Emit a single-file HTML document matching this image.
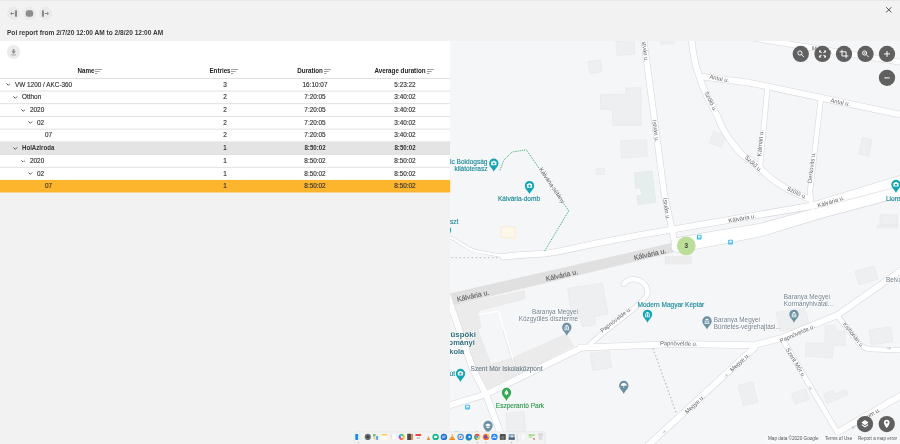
<!DOCTYPE html>
<html><head><meta charset="utf-8"><title>Poi report</title>
<style>
html,body{margin:0;padding:0;}
body{width:900px;height:444px;overflow:hidden;position:relative;background:#f2f2f2;font-family:"Liberation Sans",sans-serif;color:#333;}
.abs{position:absolute;}
#topline{left:0;top:0;width:900px;height:1px;background:#e6e8ec;}
.rb{position:absolute;width:13.4px;height:13.4px;border-radius:50%;background:#eaeaea;}
#title{left:6.6px;top:29px;font-size:6.95px;font-weight:700;line-height:8px;white-space:nowrap;color:#3a3a3a;transform:scaleX(.945);transform-origin:0 50%;}
#panel{left:0;top:40.7px;width:450px;height:151.8px;background:#fff;}
.hd{position:absolute;top:67.25px;font-size:6.65px;font-weight:700;line-height:8px;white-space:nowrap;color:#222;transform:translateX(-50%) scaleX(.94);}
.row{position:absolute;left:0;width:450px;height:12.69px;font-size:6.8px;line-height:12.69px;color:#333;-webkit-text-stroke:0.15px #333;}
.row.g{font-weight:700;-webkit-text-stroke:0;}
.row.g span{transform:scaleX(.9);}
.row.g .c{transform:translateX(-50%) scaleX(.9);}
.row span{position:absolute;top:0.45px;white-space:nowrap;transform:scaleX(.94);transform-origin:0 50%;}
.row .c{transform:translateX(-50%) scaleX(.94);transform-origin:50% 50%;}
.row svg{position:absolute;top:5.1px;width:4.6px;height:2.85px;}
</style></head><body>
<div id="wrap" style="position:absolute;left:0;top:0;width:900px;height:444px;will-change:transform">
<div class="abs" id="topline"></div>
<div class="rb" style="left:6.9px;top:6.5px"></div>
<div class="rb" style="left:22.9px;top:6.5px"></div>
<div class="rb" style="left:38.7px;top:6.5px"></div>
<div class="abs" id="title">Poi report from 2/7/20 12:00 AM to 2/8/20 12:00 AM</div>
<div class="abs" id="panel"></div>
<div class="rb" style="left:6.9px;top:45.3px;background:#ebebeb"></div>
<svg class="abs" style="left:0;top:0" width="60" height="60" viewBox="0 0 60 60">
<g fill="#8a8a8a" stroke="none">
<rect x="14.9" y="10.4" width="2.1" height="6.3"/>
<path d="M10 13.5 L12 11.8 V13.05 H14.1 V13.95 H12 V15.2 Z"/>
<rect x="25.8" y="10.3" width="7.3" height="6.4" rx="2.6" ry="2.2"/>
<rect x="41.9" y="10.4" width="2.1" height="6.3"/>
<path d="M49.1 13.5 L47.1 11.8 V13.05 H44.8 V13.95 H47.1 V15.2 Z"/>
<path d="M12.7 49.2 H14.5 V51.4 H15.9 L13.6 53.8 L11.3 51.4 H12.7 Z"/>
<rect x="11.3" y="54.5" width="4.6" height="0.8"/>
</g>
<path d="M28.1 10.4V16.6M30.8 10.4V16.6" stroke="#a2a2a2" stroke-width="0.5"/>
</svg>

<div class="hd" style="left:85.5px">Name</div>
<div class="hd" style="left:220.2px">Entries</div>
<div class="hd" style="left:310px">Duration</div>
<div class="hd" style="left:400.2px">Average duration</div>
<svg class="abs" style="left:95px;top:68.6px" width="7" height="5" viewBox="0 0 7 5"><path d="M0 0.5H7M0 2.5H4.7M0 4.5H2.3" stroke="#808080" stroke-width="0.75" fill="none"/></svg><svg class="abs" style="left:231.4px;top:68.6px" width="7" height="5" viewBox="0 0 7 5"><path d="M0 0.5H7M0 2.5H4.7M0 4.5H2.3" stroke="#808080" stroke-width="0.75" fill="none"/></svg><svg class="abs" style="left:324px;top:68.6px" width="7" height="5" viewBox="0 0 7 5"><path d="M0 0.5H7M0 2.5H4.7M0 4.5H2.3" stroke="#808080" stroke-width="0.75" fill="none"/></svg><svg class="abs" style="left:426.5px;top:68.6px" width="7" height="5" viewBox="0 0 7 5"><path d="M0 0.5H7M0 2.5H4.7M0 4.5H2.3" stroke="#808080" stroke-width="0.75" fill="none"/></svg>
<svg class="abs" style="left:0;top:70px" width="450" height="130" viewBox="0 70 450 130">
<rect x="0" y="78.00" width="450" height="0.75" fill="#d6d6d6"/>
<rect x="0" y="90.69" width="450" height="0.75" fill="#d6d6d6"/>
<rect x="0" y="103.38" width="450" height="0.75" fill="#d6d6d6"/>
<rect x="0" y="116.07" width="450" height="0.75" fill="#d6d6d6"/>
<rect x="0" y="128.76" width="450" height="0.75" fill="#d6d6d6"/>
<rect x="0" y="141.30" width="450" height="12.79" fill="#e4e4e4"/>
<rect x="0" y="154.14" width="450" height="0.75" fill="#d6d6d6"/>
<rect x="0" y="166.83" width="450" height="0.75" fill="#d6d6d6"/>
<rect x="0" y="179.92" width="450" height="12.59" fill="#fdb52e"/>
</svg>
<div class="row " style="top:78.30px"><svg style="left:5.6px" viewBox="0 0 4.2 2.6"><path d="M0.4 0.4 L2.1 2.1 L3.8 0.4" fill="none" stroke="#4c4c4c" stroke-width="0.85"/></svg><span style="left:14.5px">VW 1200 / AKC-360</span><span class="c" style="left:224.5px">3</span><span class="c" style="left:315.2px">16:10:07</span><span class="c" style="left:405.3px">5:23:22</span></div>
<div class="row " style="top:90.99px"><svg style="left:13.1px" viewBox="0 0 4.2 2.6"><path d="M0.4 0.4 L2.1 2.1 L3.8 0.4" fill="none" stroke="#4c4c4c" stroke-width="0.85"/></svg><span style="left:22.0px">Otthon</span><span class="c" style="left:224.5px">2</span><span class="c" style="left:315.2px">7:20:05</span><span class="c" style="left:405.3px">3:40:02</span></div>
<div class="row " style="top:103.68px"><svg style="left:20.6px" viewBox="0 0 4.2 2.6"><path d="M0.4 0.4 L2.1 2.1 L3.8 0.4" fill="none" stroke="#4c4c4c" stroke-width="0.85"/></svg><span style="left:29.5px">2020</span><span class="c" style="left:224.5px">2</span><span class="c" style="left:315.2px">7:20:05</span><span class="c" style="left:405.3px">3:40:02</span></div>
<div class="row " style="top:116.37px"><svg style="left:28.1px" viewBox="0 0 4.2 2.6"><path d="M0.4 0.4 L2.1 2.1 L3.8 0.4" fill="none" stroke="#4c4c4c" stroke-width="0.85"/></svg><span style="left:37.0px">02</span><span class="c" style="left:224.5px">2</span><span class="c" style="left:315.2px">7:20:05</span><span class="c" style="left:405.3px">3:40:02</span></div>
<div class="row " style="top:129.06px"><span style="left:44.5px">07</span><span class="c" style="left:224.5px">2</span><span class="c" style="left:315.2px">7:20:05</span><span class="c" style="left:405.3px">3:40:02</span></div>
<div class="row g" style="top:141.75px"><svg style="left:13.1px" viewBox="0 0 4.2 2.6"><path d="M0.4 0.4 L2.1 2.1 L3.8 0.4" fill="none" stroke="#4c4c4c" stroke-width="0.85"/></svg><span style="left:22.0px">HolAzIroda</span><span class="c" style="left:224.5px">1</span><span class="c" style="left:315.2px">8:50:02</span><span class="c" style="left:405.3px">8:50:02</span></div>
<div class="row " style="top:154.44px"><svg style="left:20.6px" viewBox="0 0 4.2 2.6"><path d="M0.4 0.4 L2.1 2.1 L3.8 0.4" fill="none" stroke="#4c4c4c" stroke-width="0.85"/></svg><span style="left:29.5px">2020</span><span class="c" style="left:224.5px">1</span><span class="c" style="left:315.2px">8:50:02</span><span class="c" style="left:405.3px">8:50:02</span></div>
<div class="row " style="top:167.13px"><svg style="left:28.1px" viewBox="0 0 4.2 2.6"><path d="M0.4 0.4 L2.1 2.1 L3.8 0.4" fill="none" stroke="#4c4c4c" stroke-width="0.85"/></svg><span style="left:37.0px">02</span><span class="c" style="left:224.5px">1</span><span class="c" style="left:315.2px">8:50:02</span><span class="c" style="left:405.3px">8:50:02</span></div>
<div class="row o" style="top:179.82px"><span style="left:44.5px">07</span><span class="c" style="left:224.5px">1</span><span class="c" style="left:315.2px">8:50:02</span><span class="c" style="left:405.3px">8:50:02</span></div>
<svg class="abs" id="map" style="left:450px;top:40.7px" width="450" height="403.3" viewBox="450 40.7 450 403.3" font-family="Liberation Sans, sans-serif">
<rect x="450" y="40" width="450" height="405" fill="#f5f6f8"/>
<rect x="616.5" y="40.5" width="18.0" height="14.0" fill="#eeeff0" stroke="#e4e5e7" stroke-width="0.5" transform="rotate(-5 625.5 47.5)"/>
<rect x="588.8" y="60.5" width="12.5" height="12.0" fill="#eeeff0" stroke="#e4e5e7" stroke-width="0.5" transform="rotate(-8 595.0 66.5)"/>
<polygon points="600.5,94.5 626.0,94.0 626.0,87.5 641.0,87.5 641.0,125.0 612.5,125.0 612.5,109.0 600.5,109.0" fill="#eeeff0" stroke="#e4e5e7" stroke-width="0.5" />
<polygon points="660.0,40.7 675.0,40.7 674.0,43.0 661.0,44.5" fill="#eeeff0" stroke="#e4e5e7" stroke-width="0.5" />
<rect x="711.0" y="133.0" width="13.0" height="12.0" fill="#eeeff0" stroke="#e4e5e7" stroke-width="0.5" transform="rotate(22 717.5 139.0)"/>
<rect x="860.5" y="138.0" width="10.0" height="17.0" fill="#eeeff0" stroke="#e4e5e7" stroke-width="0.5" transform="rotate(12 865.5 146.5)"/>
<rect x="621.0" y="140.0" width="26.0" height="17.0" fill="#eeeff0" stroke="#e4e5e7" stroke-width="0.5" transform="rotate(-3 634.0 148.5)"/>
<rect x="596.2" y="168.2" width="8.5" height="6.0" fill="#eeeff0" stroke="#e4e5e7" stroke-width="0.5" transform="rotate(-3 600.5 171.2)"/>
<polygon points="634.5,172.5 652.0,170.5 656.0,202.0 638.0,204.5 637.0,195.5 642.0,194.5 640.5,188.0 635.5,188.0" fill="#e6eded" stroke="#dde5e5" stroke-width="0.5" />
<rect x="501.1" y="226.5" width="14.0" height="11.0" fill="#fdf7ea" stroke="#f9e0b4" stroke-width="0.5" transform="rotate(3 508.1 232.0)"/>
<polygon points="449.0,180.0 450.7,180.0 450.7,191.0 449.0,191.0" fill="#fdf5e4" stroke="#f8deb0" stroke-width="0.5" />
<rect x="665.1" y="256.1" width="26.2" height="7.6" fill="#ececec" stroke="#e4e5e7" stroke-width="0.5" transform="rotate(0 678.2 259.9)"/>
<polygon points="880.0,214.5 897.5,214.5 897.5,225.0 877.0,225.0 877.0,227.5 897.5,227.5 897.5,225.0 880.0,225.0" fill="#eeeff0" stroke="#e4e5e7" stroke-width="0.5" />
<rect x="856.5" y="268.0" width="20.0" height="14.0" fill="#eeeff0" stroke="#e4e5e7" stroke-width="0.5" transform="rotate(-17 866.5 275.0)"/>
<polygon points="567.5,288.0 602.5,283.0 608.0,313.8 594.5,316.2 595.8,324.5 582.0,326.2 580.0,316.2 571.8,317.5" fill="#eeeff0" stroke="#e4e5e7" stroke-width="0.5" />
<polygon points="453.3,305.2 524.0,290.5 525.3,298.5 478.5,310.5 480.8,327.7 477.5,328.5 491.0,364.0 512.5,357.7 566.7,333.5 573.3,346.0 489.5,388.5 483.0,386.5" fill="#ebebeb" stroke="#e4e4e4" stroke-width="0.5" />
<polygon points="776.0,312.0 805.0,308.0 810.0,326.0 780.0,331.0" fill="#eeeff0" stroke="#e4e5e7" stroke-width="0.5" />
<polygon points="825.0,325.5 835.0,325.0 836.0,331.0 845.0,331.0 845.0,345.0 833.8,345.0 832.5,357.5 805.5,356.0 806.0,342.5 825.0,343.0" fill="#eeeff0" stroke="#e4e5e7" stroke-width="0.5" />
<rect x="870.0" y="328.0" width="22.0" height="15.0" fill="#eeeff0" stroke="#e4e5e7" stroke-width="0.5" transform="rotate(-8 881.0 335.5)"/>
<rect x="591.5" y="351.8" width="19.0" height="17.0" fill="#eeeff0" stroke="#e4e5e7" stroke-width="0.5" transform="rotate(-8 601.0 360.3)"/>
<polygon points="506.0,413.0 524.0,411.0 527.0,444.0 508.0,444.0" fill="#eeeff0" stroke="#e4e5e7" stroke-width="0.5" />
<rect x="740.5" y="383.0" width="15.0" height="21.0" fill="#eeeff0" stroke="#e4e5e7" stroke-width="0.5" transform="rotate(-14 748.0 393.5)"/>
<rect x="793.0" y="390.5" width="15.0" height="11.0" fill="#eeeff0" stroke="#e4e5e7" stroke-width="0.5" transform="rotate(-20 800.5 396.0)"/>
<polygon points="823.8,394.0 833.0,390.0 835.0,394.0 846.0,389.5 848.0,394.5 827.0,403.5" fill="#eeeff0" stroke="#e4e5e7" stroke-width="0.5" />
<g fill="none" stroke-linejoin="round">
<path d="M643.6 38.0 L664.5 195.0 L671.2 225.4 L675.5 246.0" stroke="#d4d7dc" stroke-width="6.7" stroke-linecap="round"/>
<path d="M691.3 36.0 C692.3 43.3 691.7 45.0 694.3 58.0 C696.9 71.0 695.6 64.3 699.0 75.0 C702.4 85.7 699.4 78.3 704.6 90.0 C709.8 101.7 705.1 92.2 714.5 110.0 C723.9 127.8 718.7 125.0 732.8 143.3 C746.9 161.6 742.3 152.3 756.7 165.0 C771.1 177.7 762.6 172.2 776.0 181.5 C789.4 190.8 785.0 187.0 797.0 193.0 C809.0 199.0 807.0 197.3 812.0 199.5" stroke="#d4d7dc" stroke-width="7.0" stroke-linecap="butt"/>
<path d="M702.0 76.3 L750.0 82.5 L900.0 114.3" stroke="#d4d7dc" stroke-width="7.0" stroke-linecap="butt"/>
<path d="M752.0 37.6 L900.0 61.9" stroke="#d4d7dc" stroke-width="6.4" stroke-linecap="butt"/>
<path d="M767.6 86.0 L760.0 167.0" stroke="#d4d7dc" stroke-width="5.7" stroke-linecap="butt"/>
<path d="M821.0 97.5 L810.0 191.0 L811.5 207.0" stroke="#d4d7dc" stroke-width="5.7" stroke-linecap="butt"/>
<path d="M448 236.5 L455.4 239.4 Q461 243.5 468 247.5 T486 252.6 L503 255.8" stroke="#d4d7dc" stroke-width="3.6" stroke-linecap="butt"/>
<path d="M623.5 283.8 Q629 277 638 279.5 Q648 283 647.5 294 Q646 300 600 335 L590 344" stroke="#d4d7dc" stroke-width="5.6" stroke-linecap="round"/>
<path d="M578.0 347.5 L675.0 343.7 L754.0 345.0 L782.0 337.5 L836.5 315.3 L902.0 269.5" stroke="#d4d7dc" stroke-width="7.0" stroke-linecap="butt"/>
<path d="M583.0 346.5 L486.0 394.0 L446.0 406.0" stroke="#d4d7dc" stroke-width="7.0" stroke-linecap="butt"/>
<path d="M756.0 346.0 L647.0 446.0" stroke="#d4d7dc" stroke-width="7.0" stroke-linecap="butt"/>
<path d="M783.0 340.0 L838.5 434.0" stroke="#d4d7dc" stroke-width="5.8" stroke-linecap="butt"/>
<path d="M838 316 L858 342 Q862 348.5 872 349 L902 350" stroke="#d4d7dc" stroke-width="5.6" stroke-linecap="butt"/>
<path d="M836.0 433.0 L902.0 394.5" stroke="#d4d7dc" stroke-width="7.0" stroke-linecap="butt"/>
<path d="M447.0 294.0 L472.5 368.0 L486.0 394.0 L500.0 432.0 L505.0 446.0" stroke="#d4d7dc" stroke-width="7.2" stroke-linecap="butt"/>
<path d="M503.8 331.0 L519.0 379.0" stroke="#d4d7dc" stroke-width="2.1" stroke-linecap="butt"/>
<polygon points="502.0,253.6 520.0,251.8 545.0,250.4 558.0,248.3 570.0,245.8 595.0,240.3 640.0,231.8 760.0,211.2 812.0,202.3 900.0,175.5 900.0,186.0 815.0,208.3 760.0,217.4 640.0,237.7 595.0,246.4 570.0,251.8 558.0,254.3 545.0,256.2 520.0,257.8 503.0,259.5 500.6,258.0 500.4,255.0" fill="#d4d7dc" stroke="#d4d7dc" stroke-width="1.1"/>
<polygon points="677.0,237.6 710.0,231.8 760.0,223.4 815.0,208.3 900.0,185.8 900.0,196.8 823.0,217.3 760.0,236.2 710.0,246.0 678.0,252.0 673.0,250.5 671.5,246.5 672.5,241.5" fill="#d4d7dc" stroke="#d4d7dc" stroke-width="1.1"/>
<polygon points="450,293.5 670.5,243.2 674,246 673.5,251.8 452,305 450,305" fill="#e0e0e0" stroke="#d9d9d9" stroke-width="0.4"/>
<path d="M643.6 38.0 L664.5 195.0 L671.2 225.4 L675.5 246.0" stroke="#fff" stroke-width="5.6" stroke-linecap="round"/>
<path d="M691.3 36.0 C692.3 43.3 691.7 45.0 694.3 58.0 C696.9 71.0 695.6 64.3 699.0 75.0 C702.4 85.7 699.4 78.3 704.6 90.0 C709.8 101.7 705.1 92.2 714.5 110.0 C723.9 127.8 718.7 125.0 732.8 143.3 C746.9 161.6 742.3 152.3 756.7 165.0 C771.1 177.7 762.6 172.2 776.0 181.5 C789.4 190.8 785.0 187.0 797.0 193.0 C809.0 199.0 807.0 197.3 812.0 199.5" stroke="#fff" stroke-width="5.9" stroke-linecap="butt"/>
<path d="M702.0 76.3 L750.0 82.5 L900.0 114.3" stroke="#fff" stroke-width="5.9" stroke-linecap="butt"/>
<path d="M752.0 37.6 L900.0 61.9" stroke="#fff" stroke-width="5.3" stroke-linecap="butt"/>
<path d="M767.6 86.0 L760.0 167.0" stroke="#fff" stroke-width="4.6" stroke-linecap="butt"/>
<path d="M821.0 97.5 L810.0 191.0 L811.5 207.0" stroke="#fff" stroke-width="4.6" stroke-linecap="butt"/>
<path d="M448 236.5 L455.4 239.4 Q461 243.5 468 247.5 T486 252.6 L503 255.8" stroke="#fff" stroke-width="2.5" stroke-linecap="butt"/>
<path d="M623.5 283.8 Q629 277 638 279.5 Q648 283 647.5 294 Q646 300 600 335 L590 344" stroke="#fff" stroke-width="4.5" stroke-linecap="round"/>
<path d="M578.0 347.5 L675.0 343.7 L754.0 345.0 L782.0 337.5 L836.5 315.3 L902.0 269.5" stroke="#fff" stroke-width="5.9" stroke-linecap="butt"/>
<path d="M583.0 346.5 L486.0 394.0 L446.0 406.0" stroke="#fff" stroke-width="5.9" stroke-linecap="butt"/>
<path d="M756.0 346.0 L647.0 446.0" stroke="#fff" stroke-width="5.9" stroke-linecap="butt"/>
<path d="M783.0 340.0 L838.5 434.0" stroke="#fff" stroke-width="4.7" stroke-linecap="butt"/>
<path d="M838 316 L858 342 Q862 348.5 872 349 L902 350" stroke="#fff" stroke-width="4.5" stroke-linecap="butt"/>
<path d="M836.0 433.0 L902.0 394.5" stroke="#fff" stroke-width="5.9" stroke-linecap="butt"/>
<path d="M447.0 294.0 L472.5 368.0 L486.0 394.0 L500.0 432.0 L505.0 446.0" stroke="#fff" stroke-width="6.1" stroke-linecap="butt"/>
<path d="M503.8 331.0 L519.0 379.0" stroke="#fff" stroke-width="1.1" stroke-linecap="butt"/>
<polygon points="502.0,253.6 520.0,251.8 545.0,250.4 558.0,248.3 570.0,245.8 595.0,240.3 640.0,231.8 760.0,211.2 812.0,202.3 900.0,175.5 900.0,186.0 815.0,208.3 760.0,217.4 640.0,237.7 595.0,246.4 570.0,251.8 558.0,254.3 545.0,256.2 520.0,257.8 503.0,259.5 500.6,258.0 500.4,255.0" fill="#fff"/>
<polygon points="677.0,237.6 710.0,231.8 760.0,223.4 815.0,208.3 900.0,185.8 900.0,196.8 823.0,217.3 760.0,236.2 710.0,246.0 678.0,252.0 673.0,250.5 671.5,246.5 672.5,241.5" fill="#fff"/>
</g>
<path d="M815 208.3 L900 185.9" stroke="#d4d7dc" stroke-width="0.6" fill="none"/>
<path d="M478.5 314.2 L498.4 311 L513 358" stroke="#fff" stroke-width="1.2" fill="none"/>
<path d="M500 170 L503.75 160 L512 151.75 L526.25 149.5 L568.75 210.5 L544.6 250.8" stroke="#38aa6c" stroke-width="1" stroke-dasharray="1.1 1.05" fill="none"/>
<path d="M451.4 257.4 H500" stroke="#c2c2c2" stroke-width="1.3" stroke-dasharray="1.4 2.65" fill="none"/>
<path d="M652.9 348 L676.3 413" stroke="#c0c0c0" stroke-width="1.4" stroke-dasharray="1.4 2.3" fill="none"/>
<text x="643.2" y="50.8" font-size="5.9" fill="#626262" text-anchor="middle" font-weight="400" stroke="#fff" stroke-width="0.9" paint-order="stroke" stroke-linejoin="round" transform="rotate(82.5 643.2 50.8)">István u.</text>
<text x="653.8" y="131.0" font-size="5.9" fill="#626262" text-anchor="middle" font-weight="400" stroke="#fff" stroke-width="0.9" paint-order="stroke" stroke-linejoin="round" transform="rotate(82.5 653.8 131.0)">István u.</text>
<text x="664.6" y="209.0" font-size="5.9" fill="#626262" text-anchor="middle" font-weight="400" stroke="#fff" stroke-width="0.9" paint-order="stroke" stroke-linejoin="round" transform="rotate(81 664.6 209.0)">István u.</text>
<text x="719.0" y="80.2" font-size="5.9" fill="#626262" text-anchor="middle" font-weight="400" stroke="#fff" stroke-width="0.9" paint-order="stroke" stroke-linejoin="round" transform="rotate(11 719.0 80.2)">Antal u.</text>
<text x="840.0" y="103.8" font-size="5.9" fill="#626262" text-anchor="middle" font-weight="400" stroke="#fff" stroke-width="0.9" paint-order="stroke" stroke-linejoin="round" transform="rotate(11 840.0 103.8)">Antal u.</text>
<text x="822.0" y="51.5" font-size="5.9" fill="#626262" text-anchor="middle" font-weight="400" stroke="#fff" stroke-width="0.9" paint-order="stroke" stroke-linejoin="round" transform="rotate(9.5 822.0 51.5)">Mária u.</text>
<text x="709.0" y="102.0" font-size="5.9" fill="#626262" text-anchor="middle" font-weight="400" stroke="#fff" stroke-width="0.9" paint-order="stroke" stroke-linejoin="round" transform="rotate(64 709.0 102.0)">Szőlő u.</text>
<text x="752.2" y="164.8" font-size="5.9" fill="#626262" text-anchor="middle" font-weight="400" stroke="#fff" stroke-width="0.9" paint-order="stroke" stroke-linejoin="round" transform="rotate(43 752.2 164.8)">Szőlő u.</text>
<text x="796.0" y="194.2" font-size="5.9" fill="#626262" text-anchor="middle" font-weight="400" stroke="#fff" stroke-width="0.9" paint-order="stroke" stroke-linejoin="round" transform="rotate(26 796.0 194.2)">Szőlő u.</text>
<text x="762.3" y="143.0" font-size="5.9" fill="#626262" text-anchor="middle" font-weight="400" stroke="#fff" stroke-width="0.9" paint-order="stroke" stroke-linejoin="round" transform="rotate(-85 762.3 143.0)">Kálmán u.</text>
<text x="813.5" y="167.5" font-size="5.9" fill="#626262" text-anchor="middle" font-weight="400" stroke="#fff" stroke-width="0.9" paint-order="stroke" stroke-linejoin="round" transform="rotate(-83 813.5 167.5)">Derkovits u.</text>
<text x="742.5" y="220.0" font-size="5.9" fill="#626262" text-anchor="middle" font-weight="400" stroke="#fff" stroke-width="0.9" paint-order="stroke" stroke-linejoin="round" transform="rotate(-10 742.5 220.0)">Kálvária u.</text>
<text x="831.5" y="203.2" font-size="5.9" fill="#626262" text-anchor="middle" font-weight="400" stroke="#fff" stroke-width="0.9" paint-order="stroke" stroke-linejoin="round" transform="rotate(-17 831.5 203.2)">Kálvária u.</text>
<text x="550.3" y="186.2" font-size="6.1" fill="#585858" text-anchor="middle" font-weight="400" stroke="#fff" stroke-width="0.9" paint-order="stroke" stroke-linejoin="round" transform="rotate(56 550.3 186.2)">Kálvária sétány</text>
<text x="473.5" y="297.9" font-size="7" fill="#626262" text-anchor="middle" font-weight="400" stroke="#626262" stroke-width="0.12" transform="rotate(-12.8 473.5 297.9)">Kálvária u.</text>
<text x="562.3" y="277.4" font-size="7" fill="#626262" text-anchor="middle" font-weight="400" stroke="#626262" stroke-width="0.12" transform="rotate(-12.8 562.3 277.4)">Kálvária u.</text>
<text x="650.5" y="256.2" font-size="7" fill="#626262" text-anchor="middle" font-weight="400" stroke="#626262" stroke-width="0.12" transform="rotate(-12.8 650.5 256.2)">Kálvária u.</text>
<text x="617.0" y="321.0" font-size="5.9" fill="#626262" text-anchor="middle" font-weight="400" stroke="#fff" stroke-width="0.9" paint-order="stroke" stroke-linejoin="round" transform="rotate(-38 617.0 321.0)">Papnövelde u.</text>
<text x="678.7" y="345.2" font-size="5.9" fill="#626262" text-anchor="middle" font-weight="400" stroke="#fff" stroke-width="0.9" paint-order="stroke" stroke-linejoin="round" transform="rotate(1 678.7 345.2)">Papnövelde u.</text>
<text x="798.0" y="335.0" font-size="5.9" fill="#626262" text-anchor="middle" font-weight="400" stroke="#fff" stroke-width="0.9" paint-order="stroke" stroke-linejoin="round" transform="rotate(-24 798.0 335.0)">Papnövelde u.</text>
<text x="741.0" y="363.5" font-size="5.9" fill="#626262" text-anchor="middle" font-weight="400" stroke="#fff" stroke-width="0.9" paint-order="stroke" stroke-linejoin="round" transform="rotate(-43 741.0 363.5)">Megye u.</text>
<text x="696.0" y="405.5" font-size="5.9" fill="#626262" text-anchor="middle" font-weight="400" stroke="#fff" stroke-width="0.9" paint-order="stroke" stroke-linejoin="round" transform="rotate(-43 696.0 405.5)">Megye u.</text>
<text x="794.2" y="363.6" font-size="5.9" fill="#626262" text-anchor="middle" font-weight="400" stroke="#fff" stroke-width="0.9" paint-order="stroke" stroke-linejoin="round" transform="rotate(59 794.2 363.6)">Szent Mór u.</text>
<text x="852.0" y="336.0" font-size="5.9" fill="#626262" text-anchor="middle" font-weight="400" stroke="#fff" stroke-width="0.9" paint-order="stroke" stroke-linejoin="round" transform="rotate(52 852.0 336.0)">Kisflórián u.</text>
<text x="869.5" y="417.3" font-size="5.9" fill="#626262" text-anchor="middle" font-weight="400" stroke="#fff" stroke-width="0.9" paint-order="stroke" stroke-linejoin="round" transform="rotate(-30 869.5 417.3)">Líceum u.</text>
<g transform="translate(493.8 163.2) scale(1.3)"><path d="M0 6.3 C-0.6 4.2 -3.6 2.5 -3.6 -0.2 A3.6 3.6 0 1 1 3.6 -0.2 C3.6 2.5 0.6 4.2 0 6.3Z" fill="#12a5b5"/><rect x="-2" y="-1.5" width="4" height="2.9" rx="0.5" fill="#fff"/><rect x="-0.8" y="-2.1" width="1.6" height="0.8" fill="#fff"/><circle cx="0" cy="0" r="0.85" fill="#12a5b5"/></g>
<text x="487.5" y="164.0" font-size="6.55" fill="#1a8a98" text-anchor="end" font-weight="400" stroke="#1a8a98" stroke-width="0.13">lc Boldogság</text>
<text x="487.5" y="170.8" font-size="6.55" fill="#1a8a98" text-anchor="end" font-weight="400" stroke="#1a8a98" stroke-width="0.13">kilátóterasz</text>
<g transform="translate(529.5 185.6) scale(1.3)"><path d="M0 6.3 C-0.6 4.2 -3.6 2.5 -3.6 -0.2 A3.6 3.6 0 1 1 3.6 -0.2 C3.6 2.5 0.6 4.2 0 6.3Z" fill="#12a5b5"/><rect x="-2" y="-1.5" width="4" height="2.9" rx="0.5" fill="#fff"/><rect x="-0.8" y="-2.1" width="1.6" height="0.8" fill="#fff"/><circle cx="0" cy="0" r="0.85" fill="#12a5b5"/></g>
<text x="519.0" y="200.9" font-size="6.55" fill="#1a8a98" text-anchor="middle" font-weight="400" stroke="#1a8a98" stroke-width="0.13">Kálvária-domb</text>
<g transform="translate(896.0 184.5) scale(1.3)"><path d="M0 6.3 C-0.6 4.2 -3.6 2.5 -3.6 -0.2 A3.6 3.6 0 1 1 3.6 -0.2 C3.6 2.5 0.6 4.2 0 6.3Z" fill="#12a5b5"/><rect x="-2" y="-1.5" width="4" height="2.9" rx="0.5" fill="#fff"/><rect x="-0.8" y="-2.1" width="1.6" height="0.8" fill="#fff"/><circle cx="0" cy="0" r="0.85" fill="#12a5b5"/></g>
<text x="886.0" y="200.5" font-size="6.55" fill="#1a8a98" text-anchor="start" font-weight="400" stroke="#1a8a98" stroke-width="0.13">Lions</text>
<text x="450.0" y="224.0" font-size="6.55" fill="#1a8a98" text-anchor="start" font-weight="400" stroke="#1a8a98" stroke-width="0.13">szt</text>
<g transform="translate(446.5 230.0) scale(1.3)"><path d="M0 6.3 C-0.6 4.2 -3.6 2.5 -3.6 -0.2 A3.6 3.6 0 1 1 3.6 -0.2 C3.6 2.5 0.6 4.2 0 6.3Z" fill="#12a5b5"/><rect x="-2" y="-1.5" width="4" height="2.9" rx="0.5" fill="#fff"/><rect x="-0.8" y="-2.1" width="1.6" height="0.8" fill="#fff"/><circle cx="0" cy="0" r="0.85" fill="#12a5b5"/></g>
<g transform="translate(566.8 327.3) scale(1.3)"><path d="M0 6.3 C-0.6 4.2 -3.6 2.5 -3.6 -0.2 A3.6 3.6 0 1 1 3.6 -0.2 C3.6 2.5 0.6 4.2 0 6.3Z" fill="#6b8fa3"/><path d="M-2 -0.9 L0 -2.1 L2 -0.9Z M-1.7 -0.5h0.7v1.7h-0.7z M-0.35 -0.5h0.7v1.7h-0.7z M1 -0.5h0.7v1.7h-0.7z M-2 1.5h4v0.6h-4z" fill="#fff"/></g>
<text x="578.0" y="314.2" font-size="6.4" fill="#6f7f8a" text-anchor="end" font-weight="400" stroke="#fff" stroke-width="0.9" paint-order="stroke" stroke-linejoin="round">Baranya Megyei</text>
<text x="578.0" y="321.2" font-size="6.4" fill="#6f7f8a" text-anchor="end" font-weight="400" stroke="#fff" stroke-width="0.9" paint-order="stroke" stroke-linejoin="round">Közgyűlés díszterme</text>
<g transform="translate(647.5 314.3) scale(1.3)"><path d="M0 6.3 C-0.6 4.2 -3.6 2.5 -3.6 -0.2 A3.6 3.6 0 1 1 3.6 -0.2 C3.6 2.5 0.6 4.2 0 6.3Z" fill="#12a5b5"/><path d="M-2 -0.9 L0 -2.1 L2 -0.9Z M-1.7 -0.5h0.7v1.7h-0.7z M-0.35 -0.5h0.7v1.7h-0.7z M1 -0.5h0.7v1.7h-0.7z M-2 1.5h4v0.6h-4z" fill="#fff"/></g>
<text x="637.5" y="307.0" font-size="6.55" fill="#1a8a98" text-anchor="start" font-weight="400" stroke="#1a8a98" stroke-width="0.13">Modern Magyar Képtár</text>
<g transform="translate(707.0 321.0) scale(1.3)"><path d="M0 6.3 C-0.6 4.2 -3.6 2.5 -3.6 -0.2 A3.6 3.6 0 1 1 3.6 -0.2 C3.6 2.5 0.6 4.2 0 6.3Z" fill="#6b8fa3"/><path d="M-2 -0.9 L0 -2.1 L2 -0.9Z M-1.7 -0.5h0.7v1.7h-0.7z M-0.35 -0.5h0.7v1.7h-0.7z M1 -0.5h0.7v1.7h-0.7z M-2 1.5h4v0.6h-4z" fill="#fff"/></g>
<text x="713.8" y="321.7" font-size="6.4" fill="#6f7f8a" text-anchor="start" font-weight="400" stroke="#fff" stroke-width="0.9" paint-order="stroke" stroke-linejoin="round">Baranya Megyei</text>
<text x="713.8" y="328.7" font-size="6.4" fill="#6f7f8a" text-anchor="start" font-weight="400" stroke="#fff" stroke-width="0.9" paint-order="stroke" stroke-linejoin="round">Büntetés-végrehajtási...</text>
<g transform="translate(794.0 314.3) scale(1.3)"><path d="M0 6.3 C-0.6 4.2 -3.6 2.5 -3.6 -0.2 A3.6 3.6 0 1 1 3.6 -0.2 C3.6 2.5 0.6 4.2 0 6.3Z" fill="#6b8fa3"/><path d="M-2 -0.9 L0 -2.1 L2 -0.9Z M-1.7 -0.5h0.7v1.7h-0.7z M-0.35 -0.5h0.7v1.7h-0.7z M1 -0.5h0.7v1.7h-0.7z M-2 1.5h4v0.6h-4z" fill="#fff"/></g>
<text x="783.8" y="299.2" font-size="6.4" fill="#6f7f8a" text-anchor="start" font-weight="400" stroke="#fff" stroke-width="0.9" paint-order="stroke" stroke-linejoin="round">Baranya Megyei</text>
<text x="783.8" y="306.2" font-size="6.4" fill="#6f7f8a" text-anchor="start" font-weight="400" stroke="#fff" stroke-width="0.9" paint-order="stroke" stroke-linejoin="round">Kormányhivatal...</text>
<text x="886.0" y="282.2" font-size="6.4" fill="#6f7f8a" text-anchor="start" font-weight="400" stroke="#fff" stroke-width="0.9" paint-order="stroke" stroke-linejoin="round">Belváros</text>
<text x="475.9" y="336.7" font-size="7.9" fill="#2f6f7c" text-anchor="end" font-weight="700" stroke="#fff" stroke-width="0.9" paint-order="stroke" stroke-linejoin="round">Pécsi Püspöki</text>
<text x="474.8" y="345.1" font-size="7.5" fill="#2f6f7c" text-anchor="end" font-weight="700" stroke="#fff" stroke-width="0.9" paint-order="stroke" stroke-linejoin="round">Hittudományi</text>
<text x="464.3" y="353.4" font-size="7.5" fill="#2f6f7c" text-anchor="end" font-weight="700" stroke="#fff" stroke-width="0.9" paint-order="stroke" stroke-linejoin="round">Főiskola</text>
<text x="470.5" y="370.7" font-size="6.6" fill="#6f7f8a" text-anchor="start" font-weight="400" stroke="#6f7f8a" stroke-width="0.12">Szent Mór Iskolaközpont</text>
<g transform="translate(460.5 373.4) scale(1.3)"><path d="M0 6.3 C-0.6 4.2 -3.6 2.5 -3.6 -0.2 A3.6 3.6 0 1 1 3.6 -0.2 C3.6 2.5 0.6 4.2 0 6.3Z" fill="#12a5b5"/><rect x="-2" y="-1.5" width="4" height="2.9" rx="0.5" fill="#fff"/><rect x="-0.8" y="-2.1" width="1.6" height="0.8" fill="#fff"/><circle cx="0" cy="0" r="0.85" fill="#12a5b5"/></g>
<text x="455.0" y="376.0" font-size="6.55" fill="#1a8a98" text-anchor="end" font-weight="400" stroke="#1a8a98" stroke-width="0.13">út</text>
<g transform="translate(506.5 392.4) scale(1.3)"><path d="M0 6.3 C-0.6 4.2 -3.6 2.5 -3.6 -0.2 A3.6 3.6 0 1 1 3.6 -0.2 C3.6 2.5 0.6 4.2 0 6.3Z" fill="#34a853"/><path d="M0 -2.3 L1.5 0 H0.9 L1.8 1.2 H0.35 V2 H-0.35 V1.2 H-1.8 L-0.9 0 H-1.5Z" fill="#fff"/></g>
<text x="495.8" y="407.4" font-size="6.55" fill="#2e9a4c" text-anchor="start" font-weight="400" stroke="#2e9a4c" stroke-width="0.13">Eszperantó Park</text>
<g transform="translate(623.8 385.4) scale(1.3)"><path d="M0 6.3 C-0.6 4.2 -3.6 2.5 -3.6 -0.2 A3.6 3.6 0 1 1 3.6 -0.2 C3.6 2.5 0.6 4.2 0 6.3Z" fill="#6b8fa3"/><path d="M-2.2 0 A2.2 2 0 0 1 2.2 0Z M-0.2 0h0.4v1.8h-0.4z" fill="#fff"/></g>
<g transform="translate(488.0 425.4) scale(1.3)"><path d="M0 6.3 C-0.6 4.2 -3.6 2.5 -3.6 -0.2 A3.6 3.6 0 1 1 3.6 -0.2 C3.6 2.5 0.6 4.2 0 6.3Z" fill="#6b8fa3"/><path d="M-2.3 -0.5 L0 -1.7 L2.3 -0.5 L0 0.7Z M-1.3 0.4 V1.3 L0 2 L1.3 1.3 V0.4 L0 1.1Z" fill="#fff"/></g>
<g transform="translate(699.2 236.8)"><rect x="-2.3" y="-2.4" width="4.6" height="4.8" rx="0.7" fill="#35b5f0"/><rect x="-1.3" y="-1.5" width="2.6" height="2.7" rx="0.4" fill="#fff"/><rect x="-1.3" y="-0.1" width="2.6" height="0.5" fill="#35b5f0"/></g>
<g transform="translate(730.5 241.8)"><rect x="-2.3" y="-2.4" width="4.6" height="4.8" rx="0.7" fill="#35b5f0"/><rect x="-1.3" y="-1.5" width="2.6" height="2.7" rx="0.4" fill="#fff"/><rect x="-1.3" y="-0.1" width="2.6" height="0.5" fill="#35b5f0"/></g>
<g transform="translate(467.5 406.8)"><rect x="-2.3" y="-2.4" width="4.6" height="4.8" rx="0.7" fill="#35b5f0"/><rect x="-1.3" y="-1.5" width="2.6" height="2.7" rx="0.4" fill="#fff"/><rect x="-1.3" y="-0.1" width="2.6" height="0.5" fill="#35b5f0"/></g>
<g transform="translate(456.5 433.6)"><rect x="-2.3" y="-2.4" width="4.6" height="4.8" rx="0.7" fill="#35b5f0"/><rect x="-1.3" y="-1.5" width="2.6" height="2.7" rx="0.4" fill="#fff"/><rect x="-1.3" y="-0.1" width="2.6" height="0.5" fill="#35b5f0"/></g>
<path transform="translate(888.8 348.0) rotate(0)" d="M-2 0H1.6M0.4 -1.1L1.7 0L0.4 1.1" stroke="#a3a6c4" stroke-width="0.5" fill="none"/>
<path transform="translate(726.0 375.5) rotate(-43)" d="M-2 0H1.6M0.4 -1.1L1.7 0L0.4 1.1" stroke="#a3a6c4" stroke-width="0.5" fill="none"/>
<path transform="translate(810.0 387.5) rotate(59)" d="M-2 0H1.6M0.4 -1.1L1.7 0L0.4 1.1" stroke="#a3a6c4" stroke-width="0.5" fill="none"/>
<path transform="translate(853.8 426.8) rotate(150)" d="M-2 0H1.6M0.4 -1.1L1.7 0L0.4 1.1" stroke="#a3a6c4" stroke-width="0.5" fill="none"/>
<path transform="translate(663.8 431.8) rotate(-43)" d="M-2 0H1.6M0.4 -1.1L1.7 0L0.4 1.1" stroke="#a3a6c4" stroke-width="0.5" fill="none"/>
<circle cx="476.7" cy="431.2" r="0.55" fill="#3aa655"/>
<circle cx="686.3" cy="245.5" r="9.4" fill="#b9dc96" fill-opacity="0.95"/><text x="686.3" y="247.8" font-size="6.4" font-weight="700" fill="#3d3d3d" text-anchor="middle">3</text>
<rect x="764" y="435" width="136" height="9" fill="#f8f9fa" fill-opacity="0.7"/>
<text font-size="4.65" fill="#555" y="439.8"><tspan x="768">Map data ©2020 Google</tspan><tspan x="825">Terms of Use</tspan><tspan x="858">Report a map error</tspan></text>
<circle cx="800.75" cy="53.6" r="8.15" fill="#5b5b5b" fill-opacity="0.97"/>
<circle cx="822.5" cy="53.6" r="8.15" fill="#5b5b5b" fill-opacity="0.97"/>
<circle cx="844" cy="53.6" r="8.15" fill="#5b5b5b" fill-opacity="0.97"/>
<circle cx="865.5" cy="53.6" r="8.15" fill="#5b5b5b" fill-opacity="0.97"/>
<circle cx="887" cy="53.6" r="8.15" fill="#5b5b5b" fill-opacity="0.97"/>
<circle cx="887" cy="77.5" r="8.15" fill="#5b5b5b" fill-opacity="0.97"/>
<circle cx="865" cy="423.75" r="8.15" fill="#5b5b5b" fill-opacity="0.97"/>
<circle cx="886.75" cy="423.75" r="8.15" fill="#5b5b5b" fill-opacity="0.97"/>
<g stroke="#fff" fill="none" stroke-width="0.95"><circle cx="799.9" cy="52.7" r="2.1"/><path d="M801.5 54.3L804 56.8"/></g>
<path d="M819 50.1h2.3l-0.8 0.8 1.3 1.3-0.7 0.7-1.3-1.3-0.8 0.8z M826 50.1v2.3l-0.8-0.8-1.3 1.3-0.7-0.7 1.3-1.3-0.8-0.8z M819 57.1v-2.3l0.8 0.8 1.3-1.3 0.7 0.7-1.3 1.3 0.8 0.8z M826 57.1h-2.3l0.8-0.8-1.3-1.3 0.7-0.7 1.3 1.3 0.8-0.8z" fill="#fff"/>
<g stroke="#fff" fill="none" stroke-width="0.95"><path d="M842 49.4V55.7H848.4M839.6 51.5H846.1V57.8"/></g>
<g stroke="#fff" fill="none" stroke-width="0.95"><circle cx="864.6" cy="52.7" r="2.1"/><path d="M866.2 54.3L868.7 56.8"/><path d="M863.6 52.7h2M864.6 51.7v2" stroke-width="0.55"/></g>
<path d="M884.1 53.6h5.8M887 50.7v5.8M884.3 77.6h5.4" stroke="#fff" fill="none" stroke-width="1"/>
<path d="M865 419.6l3.6 2.7-3.6 2.7-3.6-2.7z M861.4 424.6l3.6 2.7 3.6-2.7-0.9-0.7-2.7 2-2.7-2z" fill="#fff"/>
<path d="M886.75 419.4a2.9 2.9 0 0 1 2.9 2.9c0 2.2-2.9 5.6-2.9 5.6s-2.9-3.4-2.9-5.6a2.9 2.9 0 0 1 2.9-2.9z" fill="#fff"/><circle cx="886.75" cy="422.3" r="1" fill="#585858"/>
</svg>

<svg class="abs" style="left:350px;top:426px" width="200" height="18" viewBox="350 426 200 18">
<rect x="355" y="431.8" width="190" height="14" rx="2" fill="#f3f3f3" stroke="#dedede" stroke-width="0.5"/>
<rect x="355.3" y="433.9" width="3" height="6" rx="0.6" fill="#1a8cf0"/>
<rect x="358.3" y="433.9" width="3" height="6" rx="0.6" fill="#e4eef8"/>
<circle cx="367.8" cy="436.9" r="3.1" fill="#6d7278"/>
<circle cx="367.8" cy="436.9" r="1.6" fill="#3e4246"/>
<rect x="373.0" y="433.9" width="6" height="6" rx="0.6" fill="#e9efe6"/>
<rect x="373.0" y="433.9" width="2.5" height="2.5" rx="0.6" fill="#6ec06b"/>
<rect x="376.3" y="435.9" width="1.6" height="4" rx="0.6" fill="#4a90e2"/>
<rect x="373.5" y="437.4" width="2" height="1.6" rx="0.6" fill="#f5c84b"/>
<rect x="381.4" y="433.9" width="6" height="6" rx="0.6" fill="#fdfbf2"/>
<rect x="381.4" y="433.9" width="6" height="1.7" rx="0.6" fill="#f8d15c"/>
<rect x="390.7" y="433.9" width="5.4" height="6" rx="0.6" fill="#fbfbfb"/>
<rect x="390.7" y="433.9" width="5.4" height="6" rx="0.6" fill="none" stroke="#ddd" stroke-width="0.3"/>
<circle cx="391.8" cy="436.9" r="0.45" fill="#e55"/>
<circle cx="391.8" cy="435.4" r="0.45" fill="#48f"/><circle cx="391.8" cy="438.4" r="0.45" fill="#fa3"/>
<path d="M401.7 436.9 L404.80 436.90 A3.1 3.1 0 0 1 403.89 439.09Z" fill="#f5c33b"/>
<path d="M401.7 436.9 L403.89 439.09 A3.1 3.1 0 0 1 401.70 440.00Z" fill="#f08a2e"/>
<path d="M401.7 436.9 L401.70 440.00 A3.1 3.1 0 0 1 399.51 439.09Z" fill="#e8453c"/>
<path d="M401.7 436.9 L399.51 439.09 A3.1 3.1 0 0 1 398.60 436.90Z" fill="#b455c5"/>
<path d="M401.7 436.9 L398.60 436.90 A3.1 3.1 0 0 1 399.51 434.71Z" fill="#4a7de0"/>
<path d="M401.7 436.9 L399.51 434.71 A3.1 3.1 0 0 1 401.70 433.80Z" fill="#3bb5d8"/>
<path d="M401.7 436.9 L401.70 433.80 A3.1 3.1 0 0 1 403.89 434.71Z" fill="#5fc35a"/>
<path d="M401.7 436.9 L403.89 434.71 A3.1 3.1 0 0 1 404.80 436.90Z" fill="#b5d33b"/>
<circle cx="401.7" cy="436.9" r="0.9" fill="#fff"/>
<rect x="407.2" y="433.7" width="4" height="6.4" rx="0.6" fill="#4a4a4a"/>
<rect x="411.2" y="433.7" width="1.7" height="6.4" rx="0.6" fill="#e87a3c"/>
<rect x="415.3" y="433.9" width="6" height="6" rx="0.6" fill="#fafafa"/>
<rect x="415.3" y="433.9" width="6" height="2" rx="0.6" fill="#e64b42"/>
<rect x="416.5" y="436.9" width="3.6" height="2" rx="0.2" fill="#cfcfcf"/>
<rect x="424.6" y="433.9" width="5" height="6" rx="0.6" fill="#eef1f5"/>
<path d="M426.7 439.9 L428.7 435.9 L430.2 439.9Z" fill="#e7923c"/>
<circle cx="435.6" cy="436.9" r="3.2" fill="#19b78a"/>
<rect x="434.1" y="435.8" width="3" height="2.2" rx="0.5" fill="#e9fff8"/>
<circle cx="443.9" cy="436.9" r="3.2" fill="#1a6fd0"/>
<path d="M441.9 436.09999999999997H445.9M441.9 437.7H444.9" stroke="#fff" stroke-width="0.7"/>
<path d="M452.2 433.7 L454.2 438.7 H450.2Z" fill="#f08a1c"/>
<rect x="449.3" y="438.4" width="5.8" height="1.7" rx="0.4" fill="#f08a1c"/>
<path d="M451.2 436.09999999999997H453.2" stroke="#fff" stroke-width="0.8"/>
<circle cx="460.6" cy="436.9" r="3.2" fill="#2a8df0"/>
<circle cx="460.6" cy="436.9" r="2.2" fill="#dfeefc"/>
<path d="M459.0 438.5 L461.0 437.29999999999995 L462.20000000000005 435.29999999999995 L460.20000000000005 436.5Z" fill="#e5483f"/>
<circle cx="468.9" cy="436.9" r="3.2" fill="#1c7fd6"/>
<path d="M465.9 437.5 A3.1 3.1 0 0 0 471.09999999999997 439.2 A2.6 2.2 0 0 1 465.9 437.5Z" fill="#35c28f"/>
<circle cx="469.5" cy="436.9" r="1.1" fill="#eaf4fb"/>
<path d="M477.2 436.9 L474.43 435.30 A3.2 3.2 0 0 1 479.97 435.30Z" fill="#e0443a"/>
<path d="M477.2 436.9 L479.97 435.30 A3.2 3.2 0 0 1 477.2 440.09999999999997Z" fill="#f6c53a"/>
<path d="M477.2 436.9 L477.2 440.09999999999997 A3.2 3.2 0 0 1 474.43 435.30Z" fill="#3da45a"/>
<circle cx="477.2" cy="436.9" r="1.5" fill="#fff"/>
<circle cx="477.2" cy="436.9" r="1.15" fill="#3b7de0"/>
<circle cx="486.1" cy="436.9" r="3.2" fill="#f2752b"/>
<circle cx="485.90000000000003" cy="436.9" r="1.8" fill="#7a3fc2"/>
<path d="M486.6 433.79999999999995 A3.2 3.2 0 0 1 489.20000000000005 437.5 L487.3 436.4Z" fill="#fbc53a"/>
<circle cx="494.4" cy="436.9" r="3.2" fill="#2286f2"/>
<path d="M492.79999999999995 438.4 L494.4 435.09999999999997 L496.0 438.4M492.4 437.5H496.4" stroke="#fff" stroke-width="0.6" fill="none"/>
<rect x="499.8" y="434.1" width="6" height="5.8" rx="1" fill="#4d5052"/>
<rect x="501.2" y="435.9" width="3.2" height="4" rx="0.8" fill="#6e7275"/>
<rect x="508.7" y="434.1" width="6" height="5.6" rx="0.5" fill="#7fa8cf"/>
<rect x="508.7" y="437.3" width="6" height="2.4" rx="0.3" fill="#4a5f74"/>
<rect x="510.7" y="435.4" width="2.6" height="2.2" rx="0.3" fill="#e9d9a8"/>
<path d="M517.4 433.4V441.6" stroke="#cfcfcf" stroke-width="0.5"/>
<rect x="521.1" y="433.9" width="4.4" height="6" rx="0.4" fill="#fafafa"/>
<rect x="521.0999999999999" y="433.9" width="4.4" height="6" rx="0.4" fill="none" stroke="#e2e2e2" stroke-width="0.3"/>
<rect x="528.5" y="434.3" width="6.4" height="5" rx="0.4" fill="#f3f6f0"/>
<rect x="528.5" y="434.3" width="6.4" height="1.6" rx="0.3" fill="#a6d98e"/>
<rect x="528.7" y="436.5" width="3.6" height="1.4" rx="0.2" fill="#b8e0a3"/>
<circle cx="534.0" cy="438.9" r="0.8" fill="#e33b4a"/>
<path d="M538.3000000000001 434.09999999999997H542.9L542.3000000000001 439.9H538.9Z" fill="#dcdddf"/><path d="M538.1 434.0H543.1" stroke="#bfc1c4" stroke-width="0.7"/>
<circle cx="358.3" cy="442.4" r="0.45" fill="#444"/>
<circle cx="477.2" cy="442.4" r="0.45" fill="#444"/>
<circle cx="486.1" cy="442.4" r="0.45" fill="#444"/>
<circle cx="511.7" cy="442.4" r="0.45" fill="#444"/>
</svg>
<svg class="abs" style="left:884px;top:5px" width="10" height="10" viewBox="0 0 10 10"><path d="M2.2 2.2L7.4 7.4M7.4 2.2L2.2 7.4" stroke="#484848" stroke-width="0.95" fill="none"/></svg>
</div>
</body></html>
